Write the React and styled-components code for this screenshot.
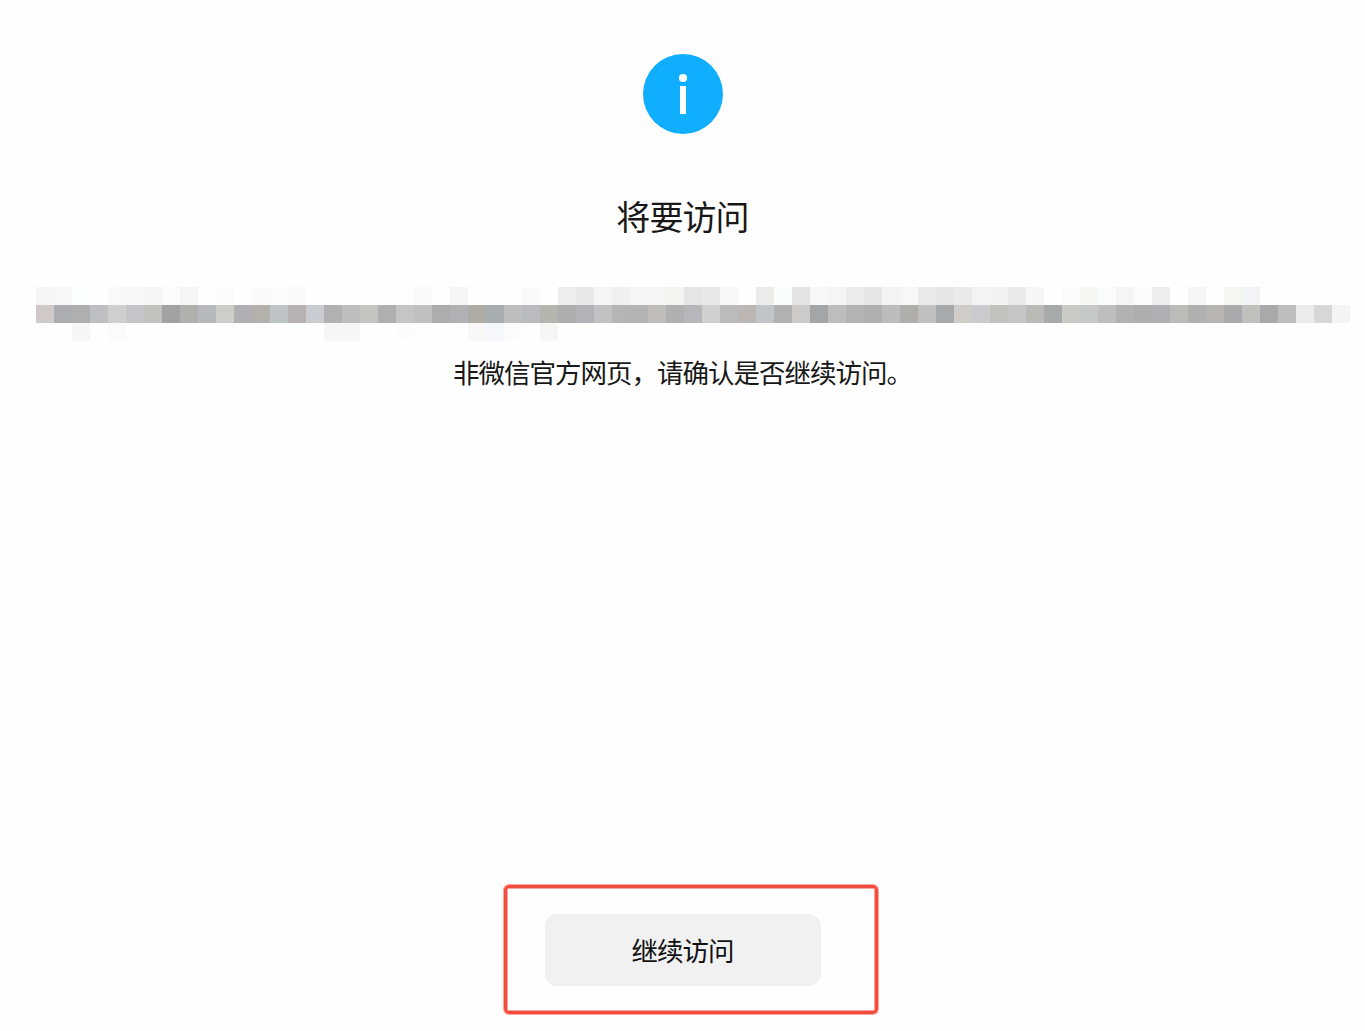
import styled, { createGlobalStyle } from 'styled-components'

const GlobalStyle = createGlobalStyle`
    * {
        box-sizing: border-box;
    }

    body {
        margin: 0;
        background-color: #fefefe;
        color: #181818;
        font-family: "Noto Sans CJK SC", sans-serif;
    }
`

const Page = styled.main`
    display: flex;
    flex-direction: column;
    align-items: center;
    height: 1031px;
    padding-top: 54px;
    overflow: hidden;
`

const InfoIcon = styled.svg`
    display: block;
    flex: none;
    width: 80px;
    height: 80px;
    margin-left: 1px;
`

const Title = styled.h1`
    margin: 58px 0 0;
    font-size: 34px;
    font-weight: 400;
    line-height: 48px;
    letter-spacing: -0.9px;
`

const Address = styled.div`
    display: grid;
    grid-template-columns: repeat(73, 18px);
    grid-auto-rows: 18px;
    align-self: flex-start;
    margin: 47px 0 0 36px;
`

const Cell = styled.span`
    background-color: ${({ $color }) => $color};
`

const Description = styled.p`
    margin: 12px 0 0;
    font-size: 26.5px;
    line-height: 38px;
    letter-spacing: -1px;
`

const Highlight = styled.div`
    flex: none;
    margin: auto 0 17px 17px;
    padding: 26px 54px 25px 38px;
    border: 3px solid #f44b3f;
    border-radius: 5px;
    box-shadow: 0 0 0 1px #f9a69f, inset 0 0 0 1px #f9a69f;
`

const Button = styled.button`
    display: block;
    width: 276px;
    height: 72px;
    padding: 0 1px 2px 0;
    border: 0;
    border-radius: 12px;
    background-color: #f1f1f1;
    color: #111;
    font-family: inherit;
    font-size: 26.5px;
    letter-spacing: -1px;
`

// Hidden address, three rows of grey blocks, '.' is an empty one
const top = `f5f5f5 f7f7f7 fcfefe . f9f9f9 f8f8f8 f5f5f5 fbfbfb f5f5f5 . fbfbfb . fafafa fcfcfc f9f9f9 . . . . .
fdfdfd f9f9f9 . f5f5f5 . . fdfdfd fafafa fefffc ededed e6e9e7 f5f5f5 f0f0f0 f5f5f5 f5f5f5 f3f3f0 e5e5e5
e8e8e8 f8f8f8 . ebebe9 f9fcfa e4e4e4 f8f8f8 f6f5f3 ebebeb e5e5e5 f1f4f3 f7f7f7 e9e9e9 e5e5e5 eaeaea f3f3f1
f2f2f2 eaeaea f6f6f6 . fbfbfb f6f6f3 fafdfb f5f5f5 fcfcfc ededed . f5f5f5 . f5f5f2 f1f3f6 . . . . .`

const middle = `cfcac7 abadb0 afafaf bebfc2 cfcfcf c4c5c8 c1c1be a3a1a2 b0b0ad b7b8bb cdcdca b0b0b4 b4b0ab bec3c6 b7b2b1
cbccd1 b1b1b1 bebebe c4c4c1 afafaf c3c6c4 c0c0c0 adadad b0b1b4 aeaaa4 a8adb0 bebebe babbbe b4b5af adadad b2b3b9
c2c2c2 b5b5b5 b3b3b3 c0bebb b0b0b0 b6b7ba d2d0ce bbbbbe bcb7b4 c1c5c8 b1b1b1 cdcbc9 a4a5a7 bebdbb b4b4b4 aeb1af
bcbcbc afaeab c0c0c0 a8a9ab cfccc9 cacbce c1c1be c5c5c8 bbbab7 a7a9ab cacac7 c6c9c7 bebebe b2b2b2 b0adae aeb0b3
bdbbb8 b0b0b0 b7b5b2 aaaaad c0c0bd a8a9ab bcbfbd ebebeb d6d8d7 f4f4f4`

const bottom = `. . f6f6f6 . fbfbfb . . . . . . . . . . . f6f6f6 f6f6f6 . . fcfcfc . . . f9f8f6 f5f7fa fcfcfc . f6f6f6`

const cells = [top, middle, bottom].join(' ').split(/\s+/)

const App = () => {
    return (
        <>
        <GlobalStyle />
        <Page>
            <InfoIcon viewBox="0 0 80 80">
                <circle cx="40" cy="40" r="40" fill="#10aeff" />
                <circle cx="40" cy="24" r="4.1" fill="#fff" />
                <rect x="37" y="32" width="6" height="28" fill="#fff" />
            </InfoIcon>
            <Title>将要访问</Title>
            <Address>
                {cells.map((color, i) => (
                    <Cell key={i} $color={color === '.' ? 'transparent' : `#${color}`} />
                ))}
            </Address>
            <Description>非微信官方网页，请确认是否继续访问。</Description>
            <Highlight>
                <Button>继续访问</Button>
            </Highlight>
        </Page>
        </>
    )
}

export default App
